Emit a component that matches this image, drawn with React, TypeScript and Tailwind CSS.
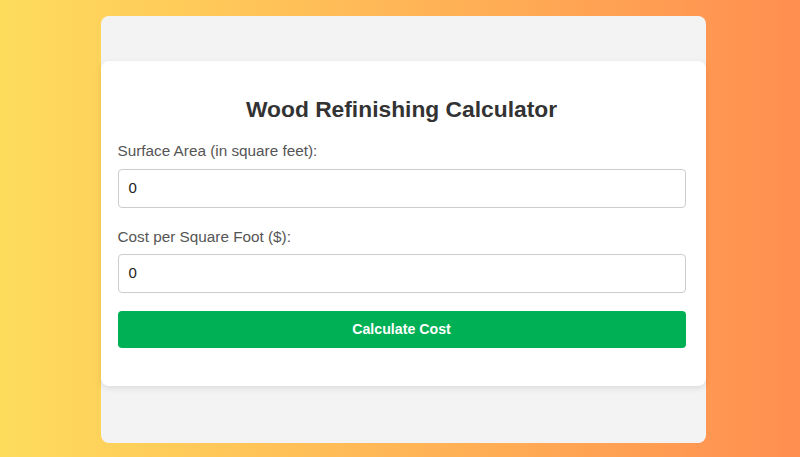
import React from "react";

export default function App() {
  return (
    <div className="w-full h-[457px] bg-gradient-to-r from-[#fddc5c] to-[#ff8e50] flex justify-center pt-[16px] pl-[6px] font-['Liberation_Sans',Arial,sans-serif] overflow-hidden">
      <div className="w-[605px] h-[427px] bg-[#f3f3f3] rounded-[8px] pt-[45px] flex flex-col">
        <div className="bg-white rounded-[8px] shadow-[0_2px_6px_rgba(0,0,0,0.1)] pl-[17px] pr-[20px] pt-[35px] pb-[38px] flex flex-col">
          <h2 className="text-center text-[22.8px] leading-[26px] font-bold text-[#333]">
            Wood Refinishing Calculator
          </h2>
          <label className="mt-[20px] text-[15.3px] leading-[17px] text-[#555]">
            Surface Area (in square feet):
          </label>
          <div className="mt-[10px] h-[39px] border border-[#ccc] rounded-[4px] flex items-center px-[10px] text-[15px] text-[#222]">
            0
          </div>
          <label className="mt-[20px] text-[15.3px] leading-[17px] text-[#555]">
            Cost per Square Foot ($):
          </label>
          <div className="mt-[9px] h-[39px] border border-[#ccc] rounded-[4px] flex items-center px-[10px] text-[15px] text-[#222]">
            0
          </div>
          <button className="mt-[18px] h-[37px] bg-[#00b055] rounded-[4px] text-white text-[14.2px] font-bold">
            Calculate Cost
          </button>
        </div>
      </div>
    </div>
  );
}
